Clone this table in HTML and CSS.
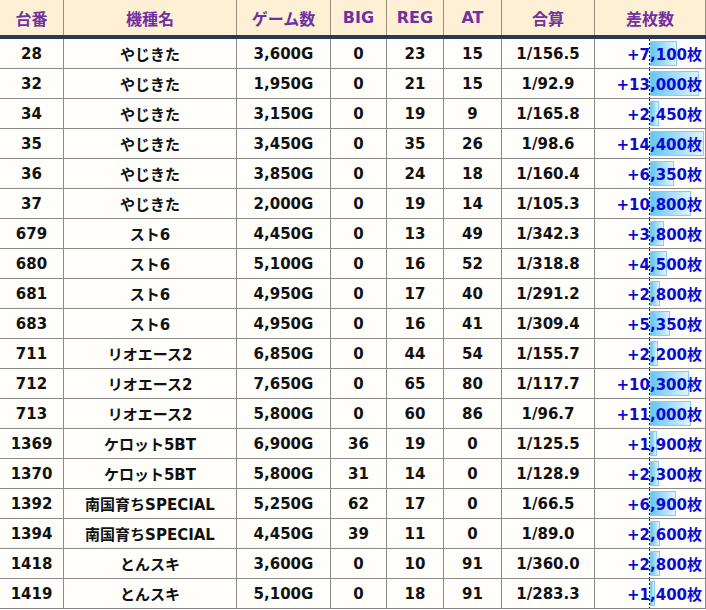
FILE: index.html
```html
<!DOCTYPE html>
<html lang="ja">
<head>
<meta charset="utf-8">
<title>差枚数一覧</title>
<link rel="stylesheet" href="styles.css">
</head>
<body>
<div class="sheet">
  <div class="row head">
    <div class="c">台番</div><div class="c">機種名</div><div class="c">ゲーム数</div><div class="c">BIG</div><div class="c">REG</div><div class="c">AT</div><div class="c">合算</div><div class="c">差枚数</div>
  </div>
  <div class="row"><div class="c">28</div><div class="c">やじきた</div><div class="c">3,600G</div><div class="c">0</div><div class="c">23</div><div class="c">15</div><div class="c">1/156.5</div><div class="c diff"><span class="zone"><span class="bar" style="width:49.3%"></span></span><span class="val">+7,100枚</span></div></div>
  <div class="row"><div class="c">32</div><div class="c">やじきた</div><div class="c">1,950G</div><div class="c">0</div><div class="c">21</div><div class="c">15</div><div class="c">1/92.9</div><div class="c diff"><span class="zone"><span class="bar" style="width:90.3%"></span></span><span class="val">+13,000枚</span></div></div>
  <div class="row"><div class="c">34</div><div class="c">やじきた</div><div class="c">3,150G</div><div class="c">0</div><div class="c">19</div><div class="c">9</div><div class="c">1/165.8</div><div class="c diff"><span class="zone"><span class="bar" style="width:17%"></span></span><span class="val">+2,450枚</span></div></div>
  <div class="row"><div class="c">35</div><div class="c">やじきた</div><div class="c">3,450G</div><div class="c">0</div><div class="c">35</div><div class="c">26</div><div class="c">1/98.6</div><div class="c diff"><span class="zone"><span class="bar" style="width:100%"></span></span><span class="val">+14,400枚</span></div></div>
  <div class="row"><div class="c">36</div><div class="c">やじきた</div><div class="c">3,850G</div><div class="c">0</div><div class="c">24</div><div class="c">18</div><div class="c">1/160.4</div><div class="c diff"><span class="zone"><span class="bar" style="width:44.1%"></span></span><span class="val">+6,350枚</span></div></div>
  <div class="row"><div class="c">37</div><div class="c">やじきた</div><div class="c">2,000G</div><div class="c">0</div><div class="c">19</div><div class="c">14</div><div class="c">1/105.3</div><div class="c diff"><span class="zone"><span class="bar" style="width:75%"></span></span><span class="val">+10,800枚</span></div></div>
  <div class="row"><div class="c">679</div><div class="c">スト6</div><div class="c">4,450G</div><div class="c">0</div><div class="c">13</div><div class="c">49</div><div class="c">1/342.3</div><div class="c diff"><span class="zone"><span class="bar" style="width:26.4%"></span></span><span class="val">+3,800枚</span></div></div>
  <div class="row"><div class="c">680</div><div class="c">スト6</div><div class="c">5,100G</div><div class="c">0</div><div class="c">16</div><div class="c">52</div><div class="c">1/318.8</div><div class="c diff"><span class="zone"><span class="bar" style="width:31.3%"></span></span><span class="val">+4,500枚</span></div></div>
  <div class="row"><div class="c">681</div><div class="c">スト6</div><div class="c">4,950G</div><div class="c">0</div><div class="c">17</div><div class="c">40</div><div class="c">1/291.2</div><div class="c diff"><span class="zone"><span class="bar" style="width:19.4%"></span></span><span class="val">+2,800枚</span></div></div>
  <div class="row"><div class="c">683</div><div class="c">スト6</div><div class="c">4,950G</div><div class="c">0</div><div class="c">16</div><div class="c">41</div><div class="c">1/309.4</div><div class="c diff"><span class="zone"><span class="bar" style="width:37.2%"></span></span><span class="val">+5,350枚</span></div></div>
  <div class="row"><div class="c">711</div><div class="c">リオエース2</div><div class="c">6,850G</div><div class="c">0</div><div class="c">44</div><div class="c">54</div><div class="c">1/155.7</div><div class="c diff"><span class="zone"><span class="bar" style="width:15.3%"></span></span><span class="val">+2,200枚</span></div></div>
  <div class="row"><div class="c">712</div><div class="c">リオエース2</div><div class="c">7,650G</div><div class="c">0</div><div class="c">65</div><div class="c">80</div><div class="c">1/117.7</div><div class="c diff"><span class="zone"><span class="bar" style="width:71.5%"></span></span><span class="val">+10,300枚</span></div></div>
  <div class="row"><div class="c">713</div><div class="c">リオエース2</div><div class="c">5,800G</div><div class="c">0</div><div class="c">60</div><div class="c">86</div><div class="c">1/96.7</div><div class="c diff"><span class="zone"><span class="bar" style="width:76.4%"></span></span><span class="val">+11,000枚</span></div></div>
  <div class="row"><div class="c">1369</div><div class="c">ケロット5BT</div><div class="c">6,900G</div><div class="c">36</div><div class="c">19</div><div class="c">0</div><div class="c">1/125.5</div><div class="c diff"><span class="zone"><span class="bar" style="width:13.2%"></span></span><span class="val">+1,900枚</span></div></div>
  <div class="row"><div class="c">1370</div><div class="c">ケロット5BT</div><div class="c">5,800G</div><div class="c">31</div><div class="c">14</div><div class="c">0</div><div class="c">1/128.9</div><div class="c diff"><span class="zone"><span class="bar" style="width:16%"></span></span><span class="val">+2,300枚</span></div></div>
  <div class="row"><div class="c">1392</div><div class="c">南国育ちSPECIAL</div><div class="c">5,250G</div><div class="c">62</div><div class="c">17</div><div class="c">0</div><div class="c">1/66.5</div><div class="c diff"><span class="zone"><span class="bar" style="width:47.9%"></span></span><span class="val">+6,900枚</span></div></div>
  <div class="row"><div class="c">1394</div><div class="c">南国育ちSPECIAL</div><div class="c">4,450G</div><div class="c">39</div><div class="c">11</div><div class="c">0</div><div class="c">1/89.0</div><div class="c diff"><span class="zone"><span class="bar" style="width:18.1%"></span></span><span class="val">+2,600枚</span></div></div>
  <div class="row"><div class="c">1418</div><div class="c">とんスキ</div><div class="c">3,600G</div><div class="c">0</div><div class="c">10</div><div class="c">91</div><div class="c">1/360.0</div><div class="c diff"><span class="zone"><span class="bar" style="width:19.4%"></span></span><span class="val">+2,800枚</span></div></div>
  <div class="row"><div class="c">1419</div><div class="c">とんスキ</div><div class="c">5,100G</div><div class="c">0</div><div class="c">18</div><div class="c">91</div><div class="c">1/283.3</div><div class="c diff"><span class="zone"><span class="bar" style="width:9.7%"></span></span><span class="val">+1,400枚</span></div></div>
</div>
</body>
</html>
```

FILE: styles.css
```css
html, body {
  margin: 0;
  padding: 0;
  background: #ffffff;
}

.sheet {
  width: 706px;
  font-family: "DejaVu Sans", "Noto Sans CJK JP", sans-serif;
  font-weight: bold;
  font-size: 15px;
  color: #111111;
}

.row {
  display: grid;
  grid-template-columns: 63px 172px 93px 55px 56px 57px 92px 110px;
  column-gap: 1px;
  padding-right: 1px;
  background: #8a8a8a;
  border-bottom: 1px solid #8a8a8a;
}

.row .c {
  height: 29px;
  display: flex;
  align-items: center;
  justify-content: center;
  background: #fffefa;
  white-space: nowrap;
}

.row.head {
  border-bottom: 4px solid #2b3956;
  background: #9a9080;
}

.row.head .c {
  height: 35px;
  background: #fdf0d4;
  color: #7030a0;
  font-size: 16px;
}

.c.diff {
  position: relative;
  justify-content: flex-end;
  padding-right: 3px;
  color: #0a0ad2;
}

.zone {
  position: absolute;
  left: 54px;
  top: 0;
  bottom: 0;
  width: 54px;
  background-image: repeating-linear-gradient(to bottom, #111 0 2px, transparent 2px 4px);
  background-size: 1px 100%;
  background-repeat: no-repeat;
}

.bar {
  position: absolute;
  left: 1px;
  top: 2px;
  bottom: 2px;
  box-sizing: border-box;
  border: 1px solid #86cfe8;
  background: linear-gradient(to right, #63c6f5, #dff4ff);
}

.val {
  position: relative;
}
```
